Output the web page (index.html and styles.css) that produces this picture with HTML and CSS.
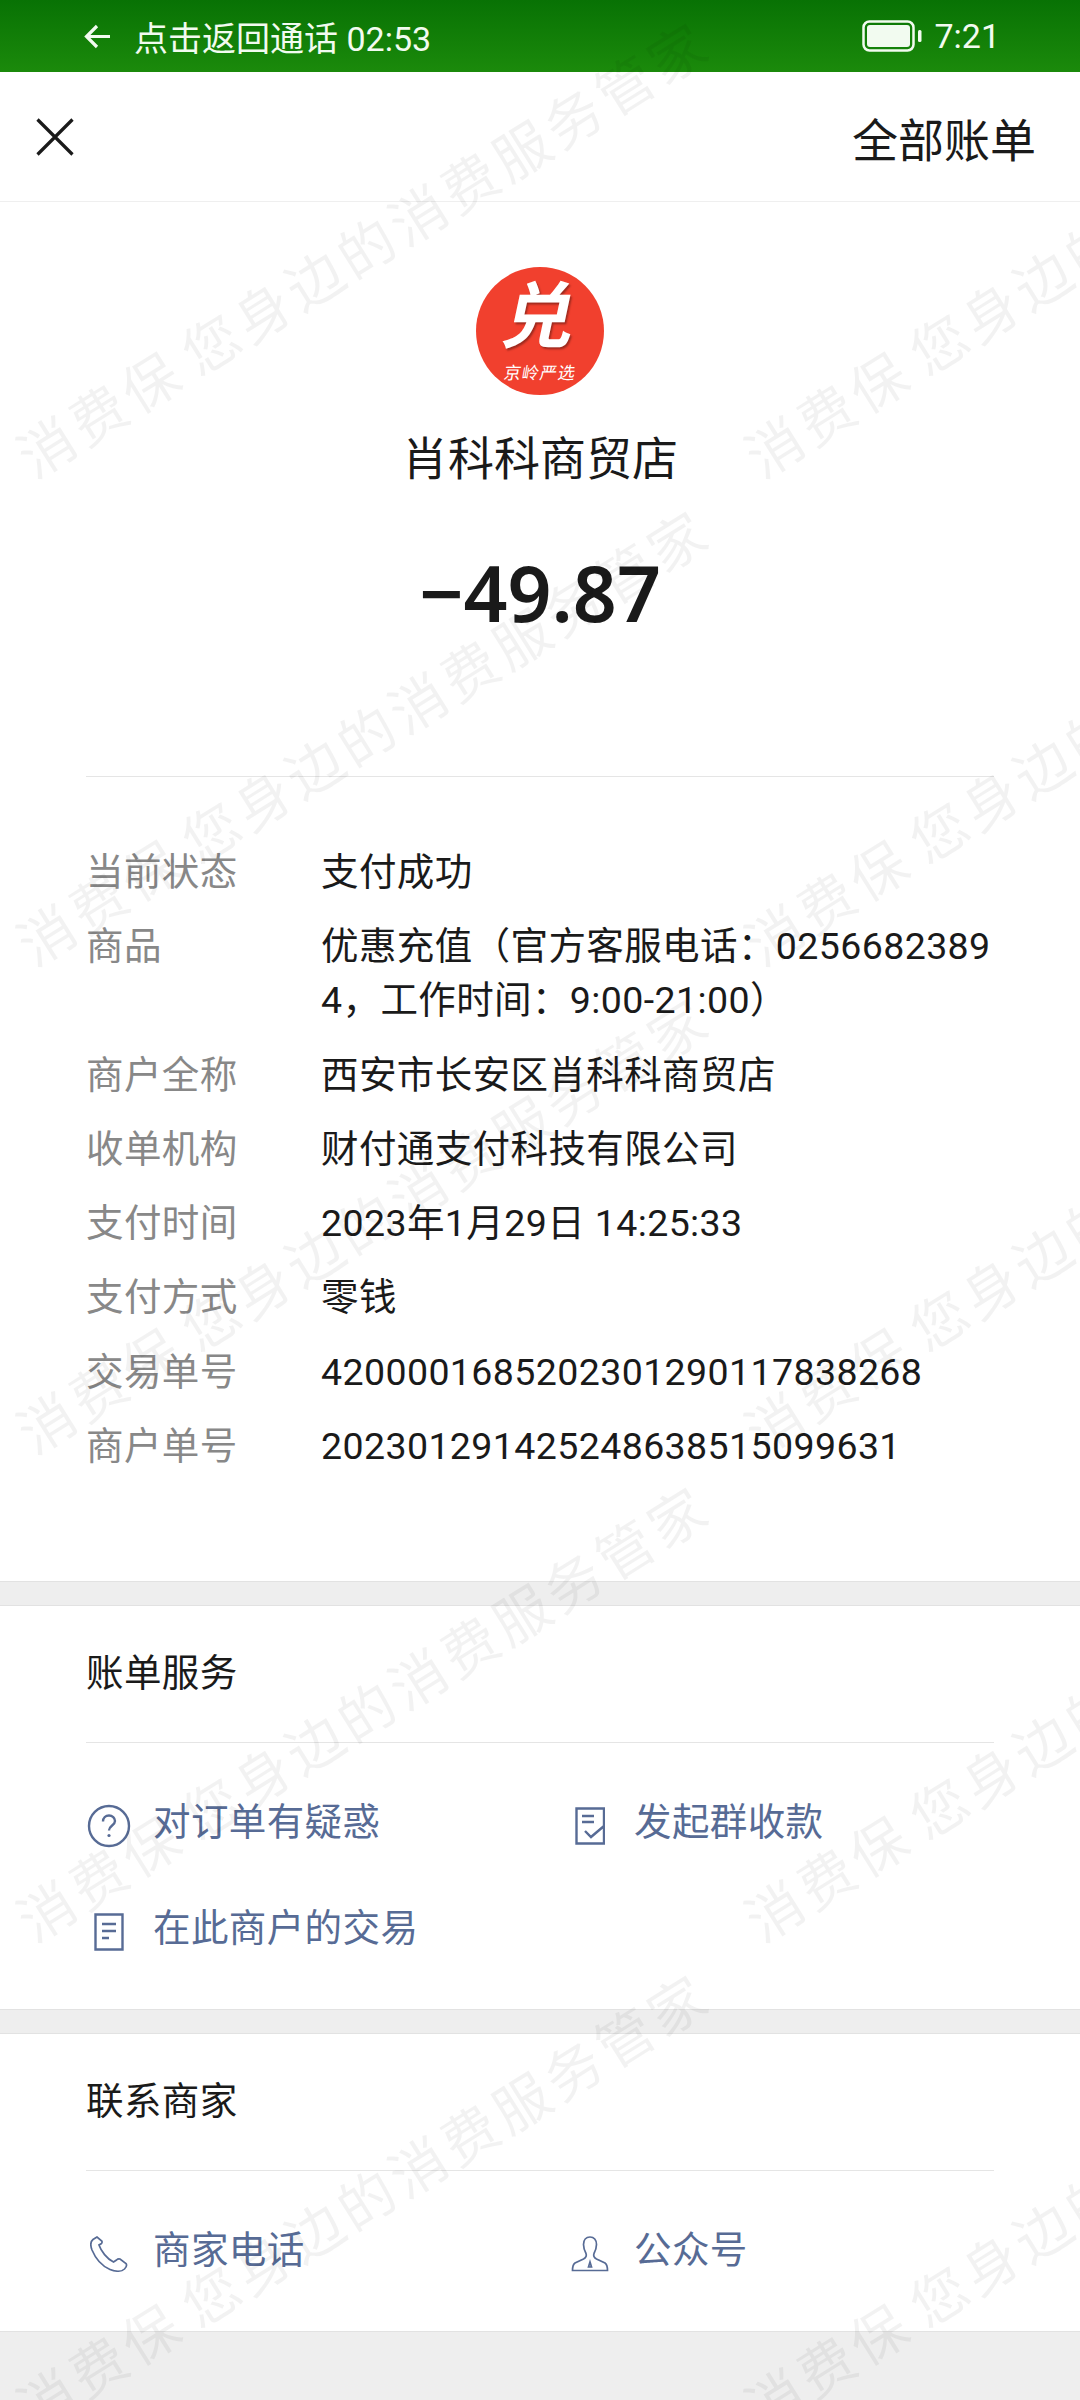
FILE: index.html
```html
<!DOCTYPE html>
<html lang="zh-CN">
<head>
  <meta charset="UTF-8">
  <title>账单详情</title>
  <link rel="stylesheet" href="styles.css">
</head>
<body>
  <div class="page">
    <!-- Call banner -->
    <div class="status-bar">
      <div class="status-left">
        <svg class="back-arrow" width="27" height="25" viewBox="0 0 27 25"><path d="M26 12.5H3M13 2 2.500 12.500 13 23" fill="none" stroke="#f2fbf0" stroke-width="3.200"/></svg>
        <span>点击返回通话 02:53</span>
      </div>
      <div class="status-right">
        <svg width="60" height="32" viewBox="0 0 60 32"><rect x="1.500" y="1.500" width="50" height="29" rx="6" fill="none" stroke="#f2fbf0" stroke-width="2.500"/><rect x="5" y="5" width="43" height="22" rx="3" fill="#f2fbf0"/><rect x="56" y="10" width="3.500" height="12" rx="1.500" fill="#f2fbf0"/></svg>
        <span>7:21</span>
      </div>
    </div>

    <div class="nav">
      <svg width="38" height="38" viewBox="0 0 38 38"><path d="M1.500 1.500 36.500 36.500M36.500 1.500 1.500 36.500" fill="none" stroke="#1a1a1a" stroke-width="3.200"/></svg>
      <span class="nav-link">全部账单</span>
    </div>

    <!-- Bill detail -->
    <div class="card detail-card">
      <div class="merchant">
        <div class="logo">
          <span class="logo-mark">兑</span>
          <span class="logo-sub">京岭严选</span>
        </div>
        <div class="merchant-name">肖科科商贸店</div>
        <div class="amount">−49.87</div>
      </div>
      <div class="rows">
        <div class="row"><div class="label">当前状态</div><div class="value">支付成功</div></div>
        <div class="row"><div class="label">商品</div><div class="value">优惠充值（官方客服电话：02566823894，工作时间：9:00-21:00）</div></div>
        <div class="row"><div class="label">商户全称</div><div class="value">西安市长安区肖科科商贸店</div></div>
        <div class="row"><div class="label">收单机构</div><div class="value">财付通支付科技有限公司</div></div>
        <div class="row"><div class="label">支付时间</div><div class="value">2023年1月29日 14:25:33</div></div>
        <div class="row"><div class="label">支付方式</div><div class="value">零钱</div></div>
        <div class="row"><div class="label">交易单号</div><div class="value">4200001685202301290117838268</div></div>
        <div class="row"><div class="label">商户单号</div><div class="value">202301291425248638515099631</div></div>
      </div>
    </div>

    <!-- Bill services -->
    <div class="card">
      <div class="card-title">账单服务</div>
      <div class="actions">
        <div class="action">
          <span class="action-icon">
            <svg width="44" height="44" viewBox="0 0 44 44"><circle cx="22" cy="22" r="20" fill="none" stroke="#576b95" stroke-width="2.400"/><path d="M16 17.500c0-3.500 2.700-6 6-6s6 2.400 6 5.500c0 4.500-6 4.500-6 9.500" fill="none" stroke="#576b95" stroke-width="2.400"/><circle cx="22" cy="31.500" r="1.600" fill="#576b95"/></svg>
          </span>
          <span>对订单有疑惑</span>
        </div>
        <div class="action">
          <span class="action-icon">
            <svg width="30" height="38" viewBox="0 0 30 38"><path d="M29 18V1.500H1.500v35H29V18M7 9h12M7 15h12M10 24l6 6 13-11" fill="none" stroke="#576b95" stroke-width="2.400"/></svg>
          </span>
          <span>发起群收款</span>
        </div>
        <div class="action">
          <span class="action-icon">
            <svg width="30" height="38" viewBox="0 0 30 38"><path d="M1.500 1.500h27v35h-27zM8 11h14M8 18h14M8 25h7" fill="none" stroke="#576b95" stroke-width="2.400"/></svg>
          </span>
          <span>在此商户的交易</span>
        </div>
      </div>
    </div>

    <!-- Contact -->
    <div class="card">
      <div class="card-title">联系商家</div>
      <div class="actions">
        <div class="action">
          <span class="action-icon">
            <svg width="38" height="36" viewBox="0 0 38 36"><path d="M7 1 3 3.500C.5 5.500.5 10 2 14c3.500 8.500 10 16 18 19.500 5.500 2.300 11.500 2.300 14.500-.5 2-2 2.500-4 1.500-5.500l-6-4.500c-1.500-.5-2.500 0-3.500 1L23.500 26C17 23 11 15 9 9l2.500-1.500c.8-1 .8-1.500.3-2.500z" fill="none" stroke="#576b95" stroke-width="1.700"/></svg>
          </span>
          <span>商家电话</span>
        </div>
        <div class="action">
          <span class="action-icon">
            <svg width="38" height="36" viewBox="0 0 38 36"><path d="M19 1c-4 0-6.500 3-6.500 7.500 0 4 1.500 7 2.500 9 1 2.500 0 4-2.500 5.500L4 27C2 28.500 1.500 30 1.500 34.500h35c0-4.500-.5-6-2.500-7.500l-8.500-4c-2.500-1.500-3.500-3-2.500-5.500 1-2 2.500-5 2.500-9C25.500 4 23 1 19 1zM19 26l-1.500 5h3z" fill="none" stroke="#576b95" stroke-width="1.700"/></svg>
          </span>
          <span>公众号</span>
        </div>
      </div>
    </div>

    <!-- Watermark sits over everything -->
    <div class="watermark">
      <span>消费保 您身边的消费服务管家</span><span>消费保 您身边的消费服务管家</span>
      <span>消费保 您身边的消费服务管家</span><span>消费保 您身边的消费服务管家</span>
      <span>消费保 您身边的消费服务管家</span><span>消费保 您身边的消费服务管家</span>
      <span>消费保 您身边的消费服务管家</span><span>消费保 您身边的消费服务管家</span>
      <span>消费保 您身边的消费服务管家</span><span>消费保 您身边的消费服务管家</span>
    </div>
  </div>
</body>
</html>
```

FILE: styles.css
```css
body {
  margin: 0;
  padding: 0;
  background-color: #eeeeee;
  color: #1a1a1a;
  font-family: Roboto, "Noto Sans CJK SC", "Noto Sans", sans-serif;
  font-size: 37.5px;
  letter-spacing: 0.4px;
}

.page {
  position: relative;
  width: 1080px;
  height: 2400px;
  overflow: hidden;
}

.status-bar {
  height: 72px;
  padding: 0 80px 0 84px;
  display: flex;
  justify-content: space-between;
  align-items: center;
  box-sizing: border-box;
  background: linear-gradient(#087204, #1b8a0b);
  color: #f2fbf0;
  font-size: 34px;
  letter-spacing: 0;
}

.status-left {
  display: flex;
  align-items: center;
  gap: 23px;
}

.status-right {
  display: flex;
  align-items: center;
  gap: 12px;
}

.nav {
  height: 130px;
  padding: 0 44px 0 36px;
  display: flex;
  justify-content: space-between;
  align-items: center;
  box-sizing: border-box;
  background-color: #fff;
  border-bottom: 1px solid #efefef;
}

.nav-link {
  font-size: 46px;
  letter-spacing: 0;
}

.card {
  background-color: #fff;
  padding: 0 86px;
  border-top: 1px solid #e2e2e2;
  border-bottom: 1px solid #e2e2e2;
  margin-bottom: 23px;
}

.detail-card {
  border-top: none;
  padding-bottom: 108px;
}

.merchant {
  padding-top: 65px;
  height: 575px;
  box-sizing: border-box;
  display: flex;
  flex-direction: column;
  align-items: center;
  border-bottom: 1px solid #e5e5e5;
}

.logo {
  width: 128px;
  height: 128px;
  border-radius: 50%;
  background-color: #f1402e;
  color: #fff;
  display: flex;
  flex-direction: column;
  align-items: center;
  overflow: hidden;
}

.logo-mark {
  font-size: 72px;
  font-weight: 700;
  line-height: 80px;
  margin-top: 11px;
  transform: skewX(-12deg);
  text-shadow: 2px 2px 2px rgba(0, 0, 0, 0.35);
}

.logo-sub {
  font-size: 17px;
  line-height: 20px;
  margin-top: 5px;
  letter-spacing: 1px;
  transform: skewX(-10deg);
}

.merchant-name {
  font-size: 46px;
  line-height: 60px;
  margin-top: 34px;
  letter-spacing: 0;
}

.amount {
  font-family: "Noto Sans", sans-serif;
  font-size: 77px;
  font-weight: 600;
  line-height: 100px;
  margin-top: 54px;
  letter-spacing: 0;
}

.rows {
  padding-top: 68px;
  display: flex;
  flex-direction: column;
  gap: 20.3px;
}

.row {
  display: flex;
  line-height: 54px;
}

.label {
  width: 235px;
  flex-shrink: 0;
  color: #888;
}

.value {
  flex: 1;
  word-break: break-all;
}

.card-title {
  height: 137px;
  line-height: 134px;
  box-sizing: border-box;
  border-bottom: 1px solid #e5e5e5;
}

.actions {
  padding: 52px 0 54px;
  display: grid;
  grid-template-columns: 481px 1fr;
  row-gap: 52px;
  color: #576b95;
}

.action {
  display: flex;
  align-items: center;
  line-height: 54px;
  gap: 22px;
}

.action-icon {
  width: 45px;
  display: flex;
  justify-content: center;
  margin-top: 8px;
}

.watermark {
  position: absolute;
  inset: 0;
  padding: 439px 0 0 24px;
  display: grid;
  grid-template-columns: 728px 728px;
  grid-auto-rows: 488px;
  pointer-events: none;
  color: rgba(0, 0, 0, 0.05);
  font-size: 56px;
  line-height: 50px;
  letter-spacing: 5px;
  word-spacing: -8px;
}

.watermark span {
  width: 900px;
  height: 50px;
  white-space: nowrap;
  transform: rotate(-32deg);
  transform-origin: left center;
}
```
